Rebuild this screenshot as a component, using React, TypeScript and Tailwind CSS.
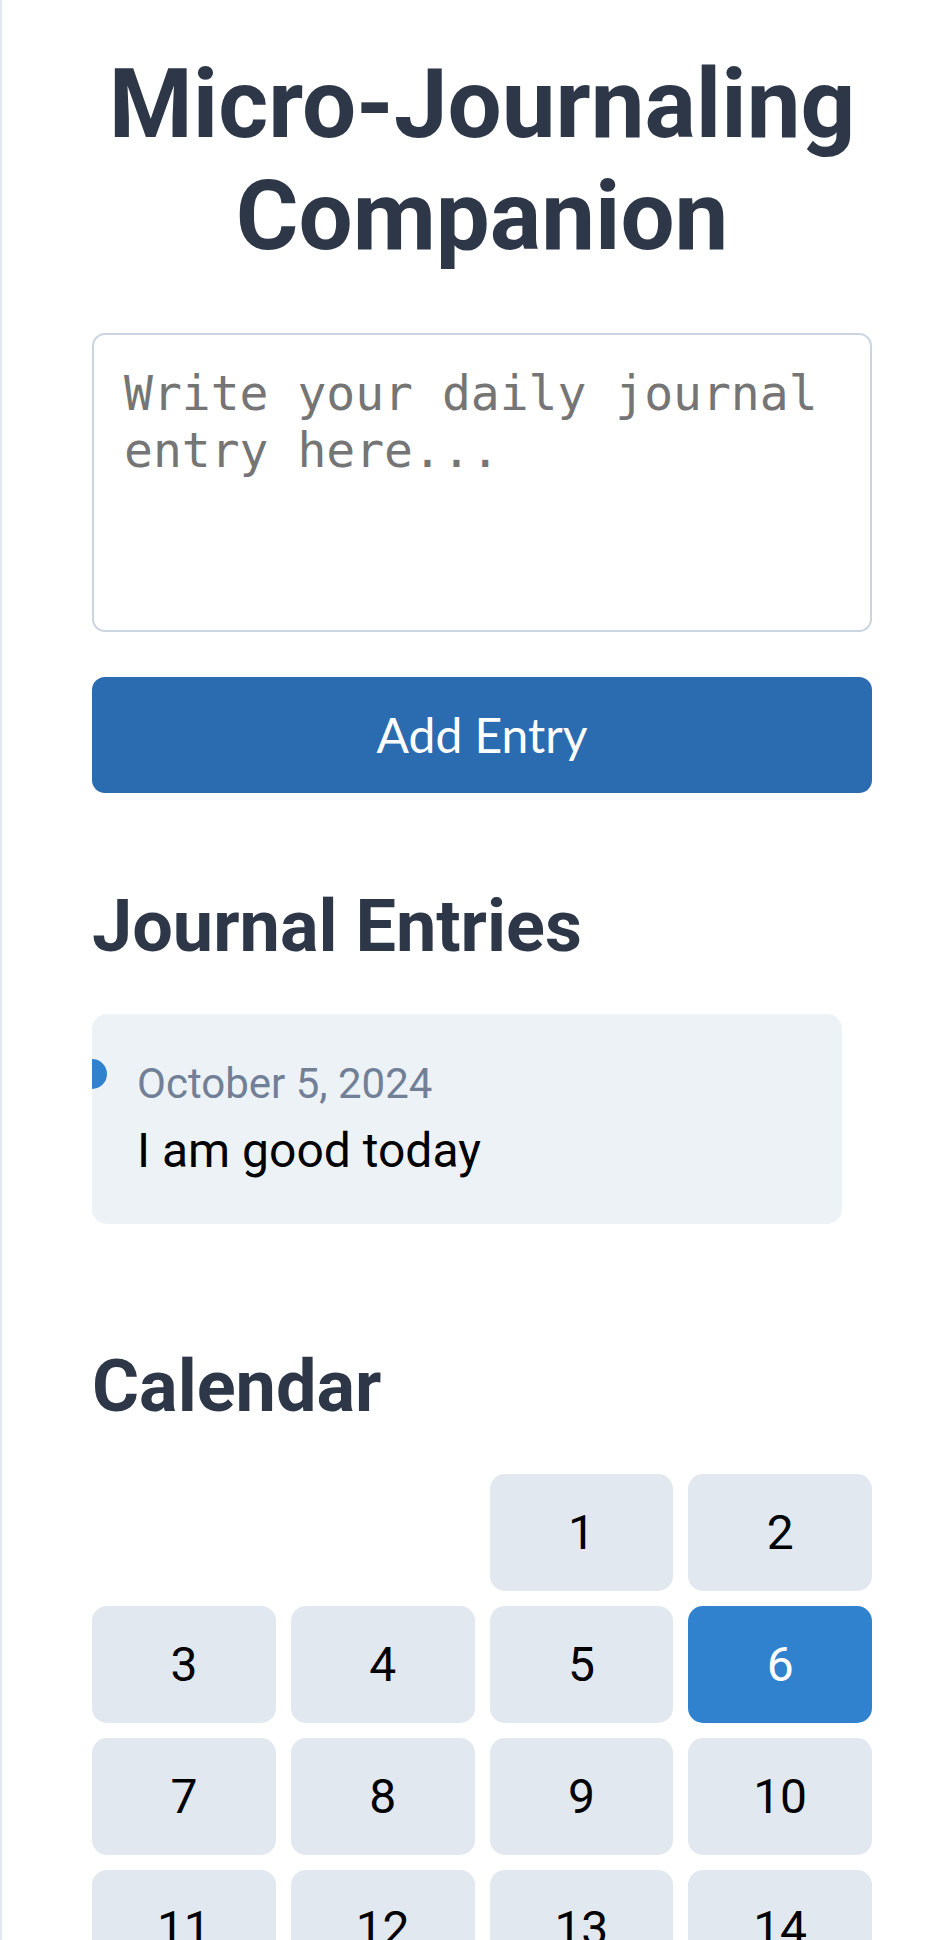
import React, { useState } from "react";

type Entry = { date: string; text: string };

const entries: Entry[] = [{ date: "October 5, 2024", text: "I am good today" }];

export default function App() {
  const [draft, setDraft] = useState("");
  const selected = 6;
  const days = Array.from({ length: 31 }, (_, i) => i + 1);

  return (
    <div className="min-h-screen bg-white border-l-2 border-[#e2e8f0] font-['Roboto',sans-serif]">
      <div className="pl-[90px] pr-[61px] pt-[48px] pb-[60px]">
        <h1 className="text-center text-[96px] font-bold leading-[112px] text-[#2d3748]">
          Micro-Journaling Companion
        </h1>

        <textarea
          value={draft}
          onChange={(e) => setDraft(e.target.value)}
          placeholder="Write your daily journal entry here..."
          className="mt-[61px] block w-full h-[299px] resize-none rounded-[13px] border-2 border-[#cbd5e0] p-[30px] font-['DejaVu_Sans_Mono',monospace] text-[48px] leading-[57px] text-black placeholder:text-[#757575] outline-none"
        />

        <button className="mt-[45px] flex h-[116px] w-full items-center justify-center rounded-[13px] bg-[#2b6cb0] font-['Lato',sans-serif] text-[48px] text-white">
          Add Entry
        </button>

        <h2 className="mt-[92px] text-[72px] font-bold leading-[84px] text-[#2d3748]">
          Journal Entries
        </h2>

        {entries.map((entry) => (
          <div
            key={entry.date}
            className="relative mt-[45px] mr-[30px] overflow-hidden rounded-[15px] bg-[#edf2f7] p-[45px]">
            <span className="absolute left-[-15px] top-[45px] h-[30px] w-[30px] rounded-full bg-[#3182ce]" />
            <p className="text-[42px] leading-[49px] text-[#718096]">{entry.date}</p>
            <p className="mt-[15px] text-[48px] leading-[56px] text-black">{entry.text}</p>
          </div>
        ))}

        <h2 className="mt-[121px] text-[72px] font-bold leading-[84px] text-[#2d3748]">
          Calendar
        </h2>

        <div className="mt-[45px] grid grid-cols-4 gap-[15px]">
          <div />
          <div />
          {days.map((d) => (
            <div
              key={d}
              className={
                d === selected
                  ? "flex h-[117px] items-center justify-center rounded-[15px] bg-[#3182ce] text-[48px] text-white"
                  : "flex h-[117px] items-center justify-center rounded-[15px] bg-[#e2e8f0] text-[48px] text-black"
              }>
              {d}
            </div>
          ))}
        </div>
      </div>
    </div>
  );
}
